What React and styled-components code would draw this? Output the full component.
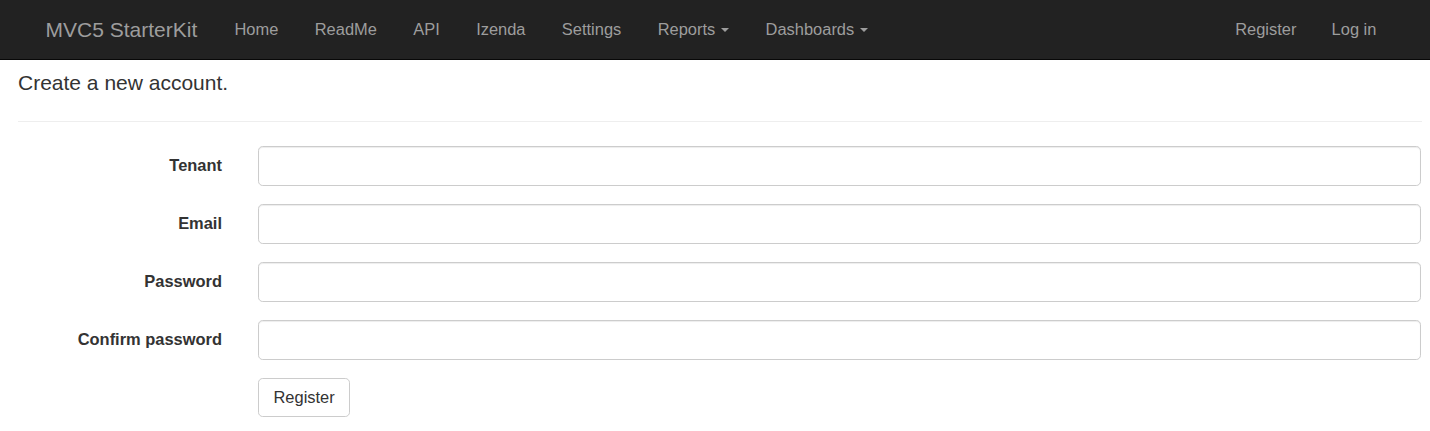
import React from "react";
import styled, { createGlobalStyle } from "styled-components";

const GlobalStyle = createGlobalStyle`
  html, body {
    margin: 0;
    padding: 0;
    background: #fff;
  }
  body {
    font-family: "Liberation Sans", Arial, Helvetica, sans-serif;
    font-size: 16.45px;
    line-height: 1.42857;
    color: #333;
  }
  * { box-sizing: border-box; }
`;

// --- Navbar ---

const Navbar = styled.nav`
  position: fixed;
  top: 0;
  left: 0;
  right: 0;
  height: 60px;
  background-color: #222;
  border-bottom: 1px solid #080808;
  z-index: 10;
`;

const NavInner = styled.div`
  height: 59px;
  display: flex;
  align-items: center;
  padding: 0 36px 0 28px;
`;

const Brand = styled.a`
  padding: 0 19px 0 17.6px;
  font-size: 21px;
  line-height: 59px;
  color: #9d9d9d;
  text-decoration: none;
`;

const NavList = styled.ul`
  display: flex;
  list-style: none;
  margin: 0;
  padding: 0;
  margin-left: ${(props) => (props.$right ? "auto" : "0")};
`;

const NavLink = styled.a`
  display: flex;
  align-items: center;
  padding: 0 ${(props) => (props.$tight ? "17.6px" : "18.2px")};
  line-height: 59px;
  color: #9d9d9d;
  text-decoration: none;
`;

const Caret = styled.span`
  display: inline-block;
  width: 0;
  height: 0;
  margin-left: 6px;
  border-top: 4.7px solid #9d9d9d;
  border-left: 4.7px solid transparent;
  border-right: 4.7px solid transparent;
`;

// --- Body ---

const Main = styled.main`
  padding: 21px 8px 0 18px;
`;

const PageTitle = styled.h2`
  margin: 0;
  font-size: 35px;
  line-height: 38px;
  font-weight: 500;
  color: #333;
`;

const SubTitle = styled.h4`
  margin: 12px 0 0;
  font-size: 21px;
  line-height: 23px;
  font-weight: 500;
  color: #333;
`;

const Rule = styled.hr`
  margin: 27px 0 24px;
  border: 0;
  border-top: 1px solid #eee;
`;

const Form = styled.form`
  display: grid;
  grid-template-columns: 204px 1fr;
  column-gap: 36px;
  row-gap: 18px;
  align-items: center;
  padding-right: 1px;
`;

const Label = styled.label`
  text-align: right;
  font-weight: 700;
  color: #333;
`;

const Input = styled.input`
  display: block;
  width: 100%;
  height: 40px;
  padding: 7px 14px;
  font: inherit;
  color: #555;
  background: #fff;
  border: 1px solid #ccc;
  border-radius: 4.7px;
  box-shadow: inset 0 1px 1px rgba(0, 0, 0, 0.075);
  outline: none;
`;

const ButtonCell = styled.div`
  grid-column: 2;
`;

const Button = styled.button`
  height: 39px;
  padding: 0 14.5px;
  font: inherit;
  color: #333;
  background: #fff;
  border: 1px solid #ccc;
  border-radius: 4.7px;
  cursor: pointer;
`;

const leftLinks = [
  { label: "Home" },
  { label: "ReadMe" },
  { label: "API" },
  { label: "Izenda" },
  { label: "Settings" },
  { label: "Reports", dropdown: true },
  { label: "Dashboards", dropdown: true },
];

const fields = [
  { id: "Tenant", label: "Tenant", type: "text" },
  { id: "Email", label: "Email", type: "email" },
  { id: "Password", label: "Password", type: "password" },
  { id: "ConfirmPassword", label: "Confirm password", type: "password" },
];

const App = () => {
  return (
    <>
      <GlobalStyle />
      <Navbar>
        <NavInner>
          <Brand href="#">MVC5 StarterKit</Brand>
          <NavList>
            {leftLinks.map((link) => (
              <li key={link.label}>
                <NavLink href="#">
                  {link.label}
                  {link.dropdown && <Caret />}
                </NavLink>
              </li>
            ))}
          </NavList>
          <NavList $right>
            <li><NavLink $tight href="#">Register</NavLink></li>
            <li><NavLink $tight href="#">Log in</NavLink></li>
          </NavList>
        </NavInner>
      </Navbar>

      <Main>
        <PageTitle>Register.</PageTitle>
        <SubTitle>Create a new account.</SubTitle>
        <Rule />
        <Form onSubmit={(e) => e.preventDefault()}>
          {fields.map((f) => (
            <React.Fragment key={f.id}>
              <Label htmlFor={f.id}>{f.label}</Label>
              <Input id={f.id} type={f.type} />
            </React.Fragment>
          ))}
          <ButtonCell>
            <Button type="submit">Register</Button>
          </ButtonCell>
        </Form>
      </Main>
    </>
  );
};

export default App;
